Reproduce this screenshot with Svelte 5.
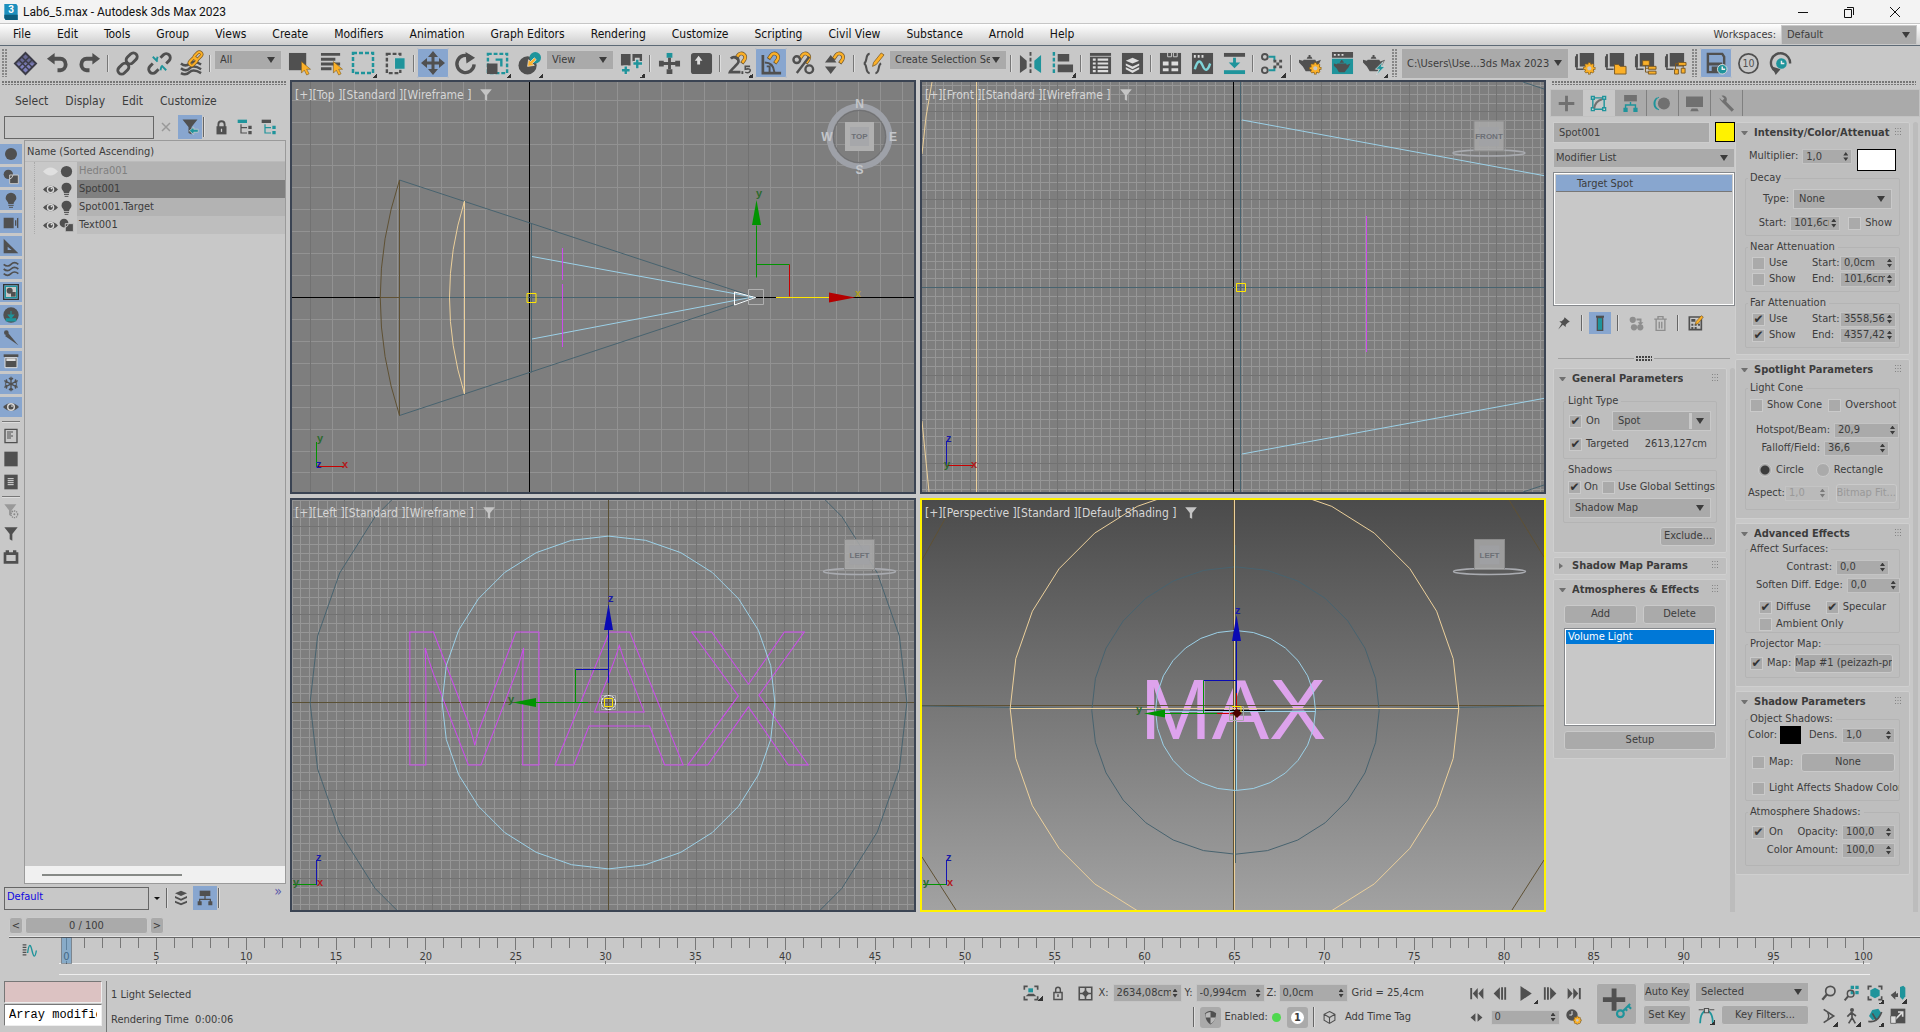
<script>
  const T = '#1f949b';
  const O = '#fbb028';
  const cursor = (x, y) =>
    `<path d="M${x} ${y}v12l3-3 2.500 5 2.500-1.200-2.500-4.800h4z" fill="${O}" stroke="#7a5a20" stroke-width=".6"/>`;
  const magnet = (x, y) =>
    `<g transform="translate(${x} ${y}) rotate(35)"><path d="M0 9V4a4 4 0 0 1 8 0v5" fill="none" stroke="#6b5530" stroke-width="4"/><path d="M0 8V4a4 4 0 0 1 8 0v4" fill="none" stroke="${O}" stroke-width="2.600"/></g>`;
  const teapot = `<path d="M5 8h12l1 2 5-2-3 6-2 2-3 4H7l-3-5-4-4V8l4 1zM8 7l1-2h4l1 2zM10 3h2v2h-2z"/>`;
  const gear = (x, y) =>
    `<g transform="translate(${x} ${y}) scale(.8)"><circle r="4" fill="none" stroke="#8a6420" stroke-width="5"/><path d="M0-8V8M-8 0H8M-5.500-5.500 5.500 5.500M5.500-5.500-5.500 5.500" stroke="#8a6420" stroke-width="3.500"/><path d="M0-7V7M-7 0H7M-5-5 5 5M5-5-5 5" stroke="${O}" stroke-width="2"/><circle r="4" fill="#c8c8c8" stroke="${O}" stroke-width="2.600"/></g>`;
  const bag = `<path d="M6 1h15v14H6zM1 5l3-3v14H1z"/><path d="M3 2v16h7" fill="none" stroke="#505050" stroke-width="1.500"/>`;
  const shapes = `<circle cx="8" cy="8" r="7"/><path d="M10 9h13v13H10z" stroke="#c8c8c8" stroke-width="1.500"/><path d="M10 15a7 7 0 0 0 5-6" fill="none" stroke="#c8c8c8" stroke-width="1.500"/>`;
  const bulb = `<path d="M12 1a8 8 0 0 1 8 8c0 4-4 5-4 9H8c0-4-4-5-4-9a8 8 0 0 1 8-8z"/><path d="M8 20h8M9 23h6" stroke="currentColor" stroke-width="1.500"/>`;
  const eye = `<path d="M0 12Q12 0 24 12 12 24 0 12z"/><circle cx="12" cy="12" r="6" fill="#d8d8d8"/><circle cx="12" cy="12" r="3.800"/><circle cx="13.500" cy="10.500" r="1.300" fill="#ddd"/>`;
  const tree = (a, b) =>
    `<path d="M1 1h14v5H1z" fill="${a}"/><path d="M6 8v13h9M6 13h9" fill="none" stroke="${b}" stroke-width="1.800"/><path d="M17 10h5v5h-5zM17 18h5v5h-5z" fill="${b}"/>`;
  const funnel = `<path d="M2 2h20l-8 10v10l-4-2v-8z"/>`;

  const icons = {
    diamond: `<path d="M12 1 23 12 12 23 1 12z" fill="#7f80bd" stroke="#3c3c48" stroke-width="2"/><path d="M8 5 19 16M5 8 16 19M16 5 5 16M19 8 8 19" stroke="#3c3c48" stroke-width="1.500"/><path d="M12 1 23 12H1z" fill="#3c3c48" opacity=".35"/>`,
    undo: `<path d="M9 1v12L1 7z"/><path d="M7 7h8a5.500 6 0 0 1 0 12h-3" fill="none" stroke="currentColor" stroke-width="4"/>`,
    redo: `<path d="M15 1v12l8-6z"/><path d="M17 7H9a5.500 6 0 0 0 0 12h3" fill="none" stroke="currentColor" stroke-width="4"/>`,
    link: `<g fill="none" stroke="currentColor" stroke-width="3"><rect x="10" y="3" width="13" height="8" rx="4" transform="rotate(-45 16 7)"/><rect x="1" y="13" width="13" height="8" rx="4" transform="rotate(-45 8 17)"/></g>`,
    unlink: `<g fill="none" stroke="currentColor" stroke-width="3"><path d="m13 6 3-3a4 4 0 0 1 6 6l-3 3M11 18l-3 3a4 4 0 0 1-6-6l3-3"/></g><path d="m5 5 5 5M14 14l5 5M9 9l1-4M14 15l-1 4" stroke="${T}" stroke-width="2"/>`,
    bind: `<path d="M1 12q5 4 9 0t12 1M1 17q5 4 9 0t12 1M1 22q5 3 9-1t12 1" fill="none" stroke="currentColor" stroke-width="2.600"/><g fill="none" stroke="#7b5a25" stroke-width="3.500"><rect x="14" y="2" width="9" height="5" rx="2.500" transform="rotate(-45 18 4)"/><rect x="9" y="8" width="9" height="5" rx="2.500" transform="rotate(-45 13 10)"/></g><g fill="none" stroke="${O}" stroke-width="2"><rect x="14" y="2" width="9" height="5" rx="2.500" transform="rotate(-45 18 4)"/><rect x="9" y="8" width="9" height="5" rx="2.500" transform="rotate(-45 13 10)"/></g>`,
    selObj: `<path d="M1 1h18v18H1z"/>${cursor(14, 10)}`,
    selName: `<path d="M1 1h20v3H1zM1 6h15v3H1zM1 11h20v3H1zM1 16h11v3H1z"/>${cursor(14, 10)}`,
    rect: `<path d="M2 2h20v20H2z" fill="none" stroke="${T}" stroke-width="2.500" stroke-dasharray="4 2"/>`,
    cross: `<path d="M3 2h14v20H3z" fill="none" stroke="currentColor" stroke-width="2.500" stroke-dasharray="4 2"/><path d="M11 6h11v12H11z" fill="${T}" stroke="#d0d0d0"/>`,
    move: `<path d="M12 0l5 6h-3.500v4.500H18V7l6 5-6 5v-3.500h-4.500V18H17l-5 6-5-6h3.500v-4.500H6V17l-6-5 6-5v3.500h4.500V6H7z"/>`,
    rotate: `<path d="M17 5A9 9 0 1 0 21 13" fill="none" stroke="currentColor" stroke-width="3.500"/><path d="M12 0 22 6l-9 6z"/>`,
    scale: `<path d="M2 2h20v20H2z" fill="none" stroke="${T}" stroke-width="2.500" stroke-dasharray="4 2"/><path d="M1 12h11v11H1z"/><path d="M10 8h6v7" fill="none" stroke="${T}" stroke-width="2.500"/>`,
    place: `<circle cx="10" cy="14" r="9.500"/><circle cx="18" cy="6" r="6" fill="${T}"/><path d="m17 6-4 4-2-2-1 7 7-1-2-2 4-4z" fill="${O}" stroke="#eee" stroke-width=".7"/>`,
    pivot: `<path d="M1 2h10v12H1zM13 2h10v8H13z"/><path d="M6 14v10M1 19h10M18 6v12M13 12h11" stroke="#ccc" stroke-width="5"/><path d="M6 15v8M2 19h8M18 8v9M14 12h9" stroke="${T}" stroke-width="2.500"/>`,
    manip: `<path d="M9 1h6v5H9z" fill="${T}"/><path d="M9 18h6v5H9zM1 9h5v6H1zM18 9h5v6h-5z"/><path d="M12 6v12M5 12h14" stroke="currentColor" stroke-width="3"/>`,
    keyb: `<rect x="1" y="1" width="22" height="22" rx="3"/><path d="M9 4l4 5h-2.500v4h-3V9H5z" fill="#ddd"/>`,
    snap: `${magnet(13, 0)}<g fill="none" stroke="currentColor" stroke-width="2.800"><path d="M3 7a4.500 4.500 0 0 1 8 3c0 3-8 8-9 11h11"/></g><path d="M14 20h2v3h-2z"/><path d="M23 15h-5v3c4-1 6 0 5 2s-3 2-5 1" fill="none" stroke="currentColor" stroke-width="1.600"/>`,
    angle: `<path d="M3 3v19h19" fill="none" stroke="currentColor" stroke-width="2.800"/><path d="M5 11q9 0 10 10M7 15h3v6" fill="none" stroke="currentColor" stroke-width="2"/>${magnet(14, 0)}`,
    percent: `${magnet(13, 0)}<g fill="none" stroke="currentColor" stroke-width="2.500"><circle cx="5" cy="8" r="3.500"/><circle cx="18" cy="18" r="4"/><path d="M18 5 5 22"/></g>`,
    spinner: `<path d="M7 3l6 8H1zM7 23l6-8H1z"/>${magnet(15, 0)}`,
    braces: `<path d="M8 2C3 2 6 11 2 12c4 1 1 10 6 10M14 22c5 0 2-9 6-10" fill="none" stroke="currentColor" stroke-width="2.200"/><path d="M11 15l1-4 8-10 3 2-8 10z" fill="${O}" stroke="#7b5a25" stroke-width=".8"/>`,
    mirror: `<path d="M1 3l7 6v8l-7 5z"/><path d="M23 3l-7 6v8l7 5z" fill="${T}"/><path d="M12 0v24" stroke="currentColor" stroke-width="2" stroke-dasharray="4 2"/>`,
    align: `<path d="M3 0v24" stroke="${T}" stroke-width="2.500" stroke-dasharray="4 2"/><path d="M7 2h12v8H7zM7 13h16v8H7z"/>`,
    table: `<path d="M1 1h22v22H1z"/><path d="M4 8h3M9 8h11M4 12h3M9 12h11M4 16h3M9 16h11M4 20h3M9 20h11" stroke="#ddd" stroke-width="2.200"/><path d="M1 4.500h22" stroke="#bbb"/>`,
    layers: `<path d="M1 1h22v22H1z"/><path d="M12 6l7 3-7 3-7-3zM5 12l7 3 7-3v2l-7 4-7-4zM5 16l7 3 7-3v2l-7 4-7-4z" fill="#ddd"/>`,
    ribbon: `<path d="M1 1h22v22H1z"/><path d="M9 1v4h4V1M15 1v4h4V1" stroke="#ccc" fill="none"/><path d="M4 10h6v4H4zM13 10h7v4h-7zM4 17h6v3H4zM13 17h7v3h-7z" fill="#ddd"/>`,
    curve: `<path d="M1 1h22v22H1z"/><path d="M3 3h2v3H3zM7 3h2v3H7zM11 3h2v3h-2z" fill="#ddd"/><path d="M4 18q4-14 8-4t8-2" fill="none" stroke="#7fd4d8" stroke-width="2.500"/>`,
    collapse: `<path d="M1 1h22v4H1z"/><path d="M1 19h22v4H1z" fill="${T}"/><path d="M12 6v8" stroke="${T}" stroke-width="3"/><path d="M6 11l6 6 6-6z" fill="${T}"/>`,
    schema: `<g fill="none" stroke="currentColor" stroke-width="2"><circle cx="4" cy="5" r="3"/><circle cx="4" cy="19" r="3"/></g><path d="M8 5h6v4M8 19h6v-4" fill="none" stroke="${T}" stroke-width="2"/><path d="M13 8h3v3h-3zM19 8h3v3h-3zM16 11h3v3h-3zM13 14h3v3h-3zM19 14h3v3h-3z"/>`,
    render: `${teapot}${gear(17, 17)}`,
    frame: `<path d="M1 0h22v6H1z"/><path d="M3 2h2v2H3zM7 2h2v2H7zM11 2h2v2h-2z" fill="#ddd"/><path d="M1 7h22v16H1z" fill="${T}"/><g transform="translate(3 6) scale(.75)">${teapot}</g>`,
    quick: `${teapot}<path d="M21 10l-8 8h4l-3 6 9-9h-4z" fill="${T}" stroke="#ddd" stroke-width=".8"/>`,
    p1: `${bag}${gear(16, 17)}`,
    p2: `${bag}<path d="M11 13h4l2 2h6v8H11z" fill="${O}" stroke="#7b5a25"/>`,
    p3: `${bag}<path d="M9 9h7v5H9zM15 15h8v3h-8zM15 20h8v3h-8z" fill="${O}" stroke="#7b5a25"/><path d="M12 14v7h3M12 17h3" fill="none" stroke="#7b5a25"/>`,
    p4: `${bag}<path d="M15 11h8v3h-8zM11 18h4v5h-4zM18 17h4v5h-4z" fill="${O}" stroke="#7b5a25"/><path d="M15 12h-3v6M20 14v3" fill="none" stroke="#7b5a25"/>`,
    autosave: `<path d="M3 2h15l2 3v16H3z" fill="none" stroke="currentColor" stroke-width="2.500"/><path d="M4 11h14v3H4zM7 15h7v6H7z"/><circle cx="18" cy="18" r="5" fill="${T}" stroke="#ddd"/><path d="M18 15v3h3" fill="none" stroke="#eee" stroke-width="1.500"/>`,
    ten: `<circle cx="12" cy="12" r="10" fill="none" stroke="currentColor" stroke-width="1.800"/><text x="12" y="16" text-anchor="middle" font-size="11">10</text>`,
    clock: `<path d="M7 20A10 10 0 1 1 22 12" fill="none" stroke="currentColor" stroke-width="2.500"/><path d="M3 15l9 3-5 6z"/><circle cx="13" cy="12" r="5.500" fill="${T}"/><path d="M13 9v3h3" fill="none" stroke="#eee" stroke-width="1.500"/>`,
    sphere: `<circle cx="12" cy="12" r="9"/>`,
    shapes, bulb, eye, funnel,
    ghost: `<path d="M0 12Q12-1 24 12 12 25 0 12z" fill="#e0e0e0"/>`,
    camera: `<path d="M1 4h15v16H1zM18 8h2v8h-2zM21 5l2-1v16l-2-1z"/>`,
    ruler: `<path fill-rule="evenodd" d="M1 1l22 22H1zM7 13v5h6z"/>`,
    waves: `<path d="M1 5q6 5 11 0t11 0M1 12q6 5 11 0t11 0M1 19q6 5 11 0t11 0" fill="none" stroke="currentColor" stroke-width="2.500"/>`,
    group: `<path d="M1 1h22v22H1z" fill="none" stroke="#333" stroke-width="2"/><path d="M3.500 3.500h17v17h-17z" fill="#c8c8c8" stroke="${T}" stroke-width="2"/><circle cx="10" cy="10" r="4.500"/><path d="M12 12h7v7h-7z"/>`,
    xref: `<circle cx="12" cy="12" r="11.500"/><path d="M12 6v7M8 12h8l-4 5zM5 17v4h14v-4" fill="${T}" stroke="${T}" stroke-width="1.600"/>`,
    bone: `<circle cx="5" cy="4" r="3.500"/><path d="M8 5 23 23 3 9z"/>`,
    container: `<path d="M1 2h22v4H1z"/><path d="M3 7h18v15H3z" fill="currentColor" stroke="#ddd" stroke-width="1.500"/><path d="M5 8h14v4H5z" fill="#ddd"/>`,
    snow: `<path d="M12 1v22M2 7l20 10M22 7 2 17M9 3l3 3 3-3M9 21l3-3 3 3M3 11l3-2-1-4M21 11l-3-2 1-4M3 13l3 2-1 4M21 13l-3 2 1 4" fill="none" stroke="currentColor" stroke-width="2"/>`,
    doc: `<path d="M3 2h18v20H3z" fill="none" stroke="currentColor" stroke-width="2"/><path d="M6 6h9M6 9h6M6 12h9M6 15h6" stroke="currentColor" stroke-width="1.500"/>`,
    block: `<path d="M2 1h20v22H2z"/>`,
    docDark: `<path d="M2 1h20v22H2z"/><path d="M7 7h9M7 10h9M7 13h9M7 16h9" stroke="#ddd" stroke-width="1.500"/>`,
    fgear: `<g fill="#999"><path d="M2 2h18l-7 9v9l-4-2v-7z"/></g><circle cx="17" cy="17" r="5" fill="#c8c8c8" stroke="#888" stroke-width="2" stroke-dasharray="2 1.200"/><circle cx="17" cy="17" r="1.500" fill="#888"/>`,
    crate: `<path fill-rule="evenodd" d="M1 5h3V2h5v3h6V2h5v3h3v17H1zM5 9v9h14V9z"/>`,
    farrow: `${funnel}<path d="M11 17l6-5v3h6v4h-6v3z" fill="${T}" stroke="#ccc"/>`,
    lock: `<path d="M4 10h16v13H4z"/><path d="M7 11V7a5 5 0 0 1 10 0v4" fill="none" stroke="currentColor" stroke-width="3"/><path d="M12 14v5" stroke="#ccc" stroke-width="2"/>`,
    lockOpen: `<path d="M5 11h14v12H5z" fill="none" stroke="currentColor" stroke-width="2.500"/><path d="M8 11V6a4 4 0 0 1 8 0v5" fill="none" stroke="currentColor" stroke-width="2.500"/><path d="M12 14v5" stroke="currentColor" stroke-width="2.500"/>`,
    treeA: tree(T, '#505050'),
    treeB: tree('#505050', T),
    stack: `<path d="M12 1l9 4-9 4-9-4zM3 9l9 4 9-4v3l-9 4-9-4zM3 16l9 4 9-4v3l-9 4-9-4z"/>`,
    org: `<path d="M4 1h16v8H4z"/><path d="M12 9v5M4 18v-4h16v4" fill="none" stroke="currentColor" stroke-width="2"/><path d="M1 17h6v6H1zM17 17h6v6h-6z"/>`,
    plus: `<path d="M10 1h4v9h9v4h-9v9h-4v-9H1v-4h9z"/>`,
    modify: `<path d="M4 4h16v16H4z" fill="none" stroke="${T}" stroke-width="2"/><path d="M1 1h6v6H1zM17 1h6v6h-6zM1 17h6v6H1zM17 17h6v6h-6z" fill="${T}"/><path d="M3 3h2v2H3zM19 3h2v2h-2zM3 19h2v2H3zM19 19h2v2h-2z" fill="#ddd"/><path d="M6 19q1-10 11-13" fill="none" stroke="currentColor" stroke-width="3"/>`,
    hier: `<path d="M3 0h18v9H3z"/><path d="M12 10v4M5 19v-5h14v5" fill="none" stroke="${T}" stroke-width="2"/><path d="M2 18h6v6H2zM16 18h6v6h-6z" fill="${T}"/>`,
    motion: `<circle cx="14" cy="12" r="8.500"/><path d="M7 3a10 10 0 0 0 0 18M4 4a10 10 0 0 0 0 16" fill="none" stroke="${T}" stroke-width="1.500"/>`,
    display: `<path d="M0 2h24v15H0zM8 19h8l2 4H6z"/>`,
    wrench: `<path d="M7 8 21 22" stroke="currentColor" stroke-width="4.500"/><path d="M2 4l4 4 3-3-4-4c5-1 9 3 7 8-4 4-9 0-10-5z"/>`,
    pin: `<path d="M13 2l9 8-3 1-4 4v4l-5-4-8 8 6-10-4-4h4l4-4z"/>`,
    result: `<path d="M6 1h12v3H6z"/><path d="M8 4h8v19H8z" fill="${T}" stroke="#505050" stroke-width="2"/>`,
    unique: `<g fill="#8e8e8e"><circle cx="6" cy="6" r="5"/><circle cx="8" cy="18" r="5"/><circle cx="18" cy="18" r="5"/><path d="M12 4h8v6h3l-5 5-4-5h3V7h-5z"/></g>`,
    trash: `<g fill="none" stroke="#8e8e8e" stroke-width="2.200"><path d="M2 5h20M8 4V1h8v3M5 6v17h14V6M10 9v11M14 9v11"/></g>`,
    config: `<path d="M2 3h18v19H2z" fill="none" stroke="currentColor" stroke-width="2.500"/><path d="M5 6h6v4H5zM5 13h3v3H5zM10 13h3v3h-3zM15 13h3v3h-3zM5 18h3v3H5zM10 18h3v3h-3z"/><path d="M11 14l1-4 8-9 3 2-8 10z" fill="${O}" stroke="#7b5a25"/>`,
    track: `<path d="M1 3h6M1 7h6M1 11h6M1 15h6M1 19h6" stroke="currentColor" stroke-width="2.200"/><path d="M9 16q3-22 7-4t7 0" fill="none" stroke="${T}" stroke-width="2.200"/>`,
    isolate: `<path d="M2 7V2h5M17 2h5v5M22 17v5h-5M7 22H2v-5" fill="none" stroke="currentColor" stroke-width="2.500"/><path d="M8 5h7v6H8z" fill="${T}"/><path d="M4 17l4-4h8l4 4z"/>`,
    offset: `<path d="M2 2h20v20H2zM12 2v20M2 12h20" fill="none" stroke="currentColor" stroke-width="2.500"/><path d="M6 12l6-6 6 6-6 6z"/>`,
    start: `<path d="M2 3h3v18H2zM14 3v18l-8-9zM23 3v18l-8-9z"/>`,
    prev: `<path d="M11 2v20L1 12zM13 2h3v20h-3zM18 2h3v20h-3z"/>`,
    play: `<path d="M4 0l18 12L4 24z"/>`,
    next: `<path d="M13 2v20l10-10zM8 2h3v20H8zM3 2h3v20H3z"/>`,
    end: `<path d="M22 3h-3v18h3zM10 3v18l8-9zM1 3v18l8-9z"/>`,
    keymode: `<path d="M10 4v16L1 12zM14 4v16l9-8z"/>`,
    timecfg: `<circle cx="9" cy="9" r="8.500"/><path d="M9 3v6H5" fill="none" stroke="#ddd" stroke-width="1.500"/>${gear(17, 17)}`,
    setkey: `<path d="M13 2h5v9h9v5h-9v9h-5v-9H4v-5h9z" fill="#505050"/><path d="M32 18l-8 8M30 20l3 3M27 23l2 2" stroke="${T}" stroke-width="2.200"/><circle cx="22" cy="28" r="3.500" fill="none" stroke="${T}" stroke-width="2.200"/>`,
    tangent: `<path d="M3 23C3 10 8 5 12 5s9 5 9 18" fill="none" stroke="${T}" stroke-width="2.500"/><path d="M9 2h6v6H9z" fill="#ccc" stroke="#505050" stroke-width="1.500"/><path d="M1 4h7M16 4h7" stroke="currentColor" stroke-width="1.500"/>`,
    mag: `<circle cx="14" cy="9" r="7" fill="none" stroke="currentColor" stroke-width="2.500"/><path d="M9 14 2 22" stroke="currentColor" stroke-width="3.500"/>`,
    magall: `<path d="M10 1h5v5h-5zM17 1h5v5h-5zM10 9h5v5h-5zM17 9h5v5h-5z" fill="${T}"/><circle cx="10" cy="13" r="5" fill="none" stroke="currentColor" stroke-width="2.200"/><path d="M6 17 1 23" stroke="currentColor" stroke-width="3"/>`,
    extents: `<path d="M2 7V2h5M17 2h5v5M22 17v5h-5M7 22H2v-5" fill="none" stroke="currentColor" stroke-width="2.500"/><path d="M12 4l7 4v8l-7 4-7-4V8z" fill="${T}"/>`,
    extall: `<path d="M15 3l5-2 3 3v13l-4 5-4-4z" fill="${T}"/><path d="M1 15l8-6v4l3-1v6H8v4z"/>`,
    fov: `<path d="M4 2l15 10L4 22" fill="none" stroke="currentColor" stroke-width="2.500"/><path d="M10 7q3 5 0 10" fill="none" stroke="currentColor" stroke-width="2"/>`,
    walk: `<circle cx="12" cy="3" r="3"/><path d="M12 6v9l-5 8M12 14l5 9M5 13l6-6 7 5" fill="none" stroke="currentColor" stroke-width="2.500"/>`,
    orbit: `<path d="M8 3l9-2 4 6-4 9-9 2-5-6z" fill="${T}"/><path d="M2 20q14 3 20-14M8 8l6 10" fill="none" stroke="currentColor" stroke-width="2.500"/>`,
    maxim: `<path d="M1 1h22v22H1z"/><path d="M12 6h7v7M18 7 8 17" fill="none" stroke="#ddd" stroke-width="2.500"/><path d="M1 12h8v11H1z" fill="#ddd" stroke="#505050"/>`,
    mask: `<path d="M3 5q9-8 18 0-1 14-9 18Q4 19 3 5z"/><path d="M12 3v9H4V6q4-3 8-3zM12 12h8q-2 7-8 10z" fill="#ccc" opacity=".85"/>`,
    cube: `<path d="M12 1l10 5v11l-10 6-10-6V6zM2 6l10 6 10-6M12 12v11" fill="none" stroke="currentColor" stroke-width="2"/>`,
    logo: `<path d="M2 0h18l2 3v21H4l-2-3z" fill="#1c8fbd"/><path d="M2 16h20v8H4l-2-3z" fill="#0c5c7c"/><text x="12" y="14" text-anchor="middle" font-size="15" font-weight="bold" fill="#fff">3</text>`,
  };

  const menus = ['File', 'Edit', 'Tools', 'Group', 'Views', 'Create', 'Modifiers', 'Animation', 'Graph Editors', 'Rendering', 'Customize', 'Scripting', 'Civil View', 'Substance', 'Arnold', 'Help'];

  const tools = [
    'diamond', 'undo', 'redo', '|', 'link', 'unlink', 'bind', '|', { sel: 'All', c: 'w68' },
    'selObj', 'selName', 'rect+', 'cross', '|', 'move*', 'rotate', 'scale+', 'place+', { sel: 'View', c: 'w68' },
    'pivot+', '|', 'manip', 'keyb', '|', 'snap+', 'angle*', 'percent', 'spinner', '|', 'braces',
    { sel: 'Create Selection Se', c: 'w118' }, '|', 'mirror', 'align+', '|', 'table', 'layers', '|', 'ribbon', 'curve',
    'collapse', '|', 'schema+', '|', 'render', 'frame', 'quick+', ':', { sel: 'C:\\Users\\Use...3ds Max 2023', c: 'w168' },
    'p1', 'p2', 'p3', 'p4', ':', 'autosave*', 'ten', 'clock',
  ];

  const strip = ['sphere', 'shapes', 'bulb', 'camera', 'ruler', 'waves', 'group', 'xref', 'bone', 'container', 'snow', 'eye'];
  const nodes = [
    { name: 'Hedra001', eye: 'ghost', icon: 'sphere', c: 'dim' },
    { name: 'Spot001', eye: 'eye', icon: 'bulb', c: 'on' },
    { name: 'Spot001.Target', eye: 'eye', icon: 'bulb', c: '' },
    { name: 'Text001', eye: 'eye', icon: 'shapes', c: 'soft' },
  ];
  const frames = Array.from({ length: 101 }, (_, i) => i);

  // Builds grid line paths around an origin: thin lines, plus every tenth as a darker line.
  function grid(ox, oy, step, x0, y0) {
    let thin = '';
    let dark = '';
    for (let k = -70; k <= 70; k++) {
      const x = ox + k * step;
      const y = oy + k * step;
      const lx = x > x0 && x < x0 + 622 ? `M${x.toFixed(1)} ${y0}v410` : '';
      const ly = y > y0 && y < y0 + 410 ? `M${x0} ${y.toFixed(1)}h622` : '';
      if (k % 10 === 0) dark += lx + ly;
      else thin += lx + ly;
    }
    return { thin, dark };
  }
  // Closed 28-sided outline of a light cone ring.
  function ring(cx, cy, r) {
    return Array.from({ length: 28 }, (_, i) => {
      const a = (i * Math.PI) / 14;
      return `${(cx + r * Math.cos(a)).toFixed(1)},${(cy + r * Math.sin(a)).toFixed(1)}`;
    }).join(' ');
  }
  const gTop = grid(529.5, 297.5, 21.93, 292, 82);
  const gFront = grid(1233.5, 287.5, 8.78, 922, 82);
  const gLeft = grid(608.5, 702.5, 8.79, 292, 500);
</script>

{#snippet ic(name, size = 24)}
  <span class="ic">{@html `<svg width="${size}" height="${size}" viewBox="0 0 24 24" fill="currentColor" aria-hidden="true">${icons[name]}</svg>`}</span>
{/snippet}

{#snippet sel(value, cls, label)}
  <span class="sel {cls}"><select aria-label={label ?? value}><option>{value}</option></select></span>
{/snippet}

{#snippet spin(value, cls, label, disabled = false)}
  <span class="spin {cls}" class:disabled>
    <input type="text" {value} aria-label={label} {disabled} />
    <i></i>
  </span>
{/snippet}

{#snippet chk(label, checked, cls = '')}
  <label class="chk {cls}"><input type="checkbox" {checked} /><span>{label}</span></label>
{/snippet}

{#snippet head(title, open = true)}
  <h3 class="head"><button type="button" aria-expanded={open}><i class:closed={!open}></i><span>{title}</span></button>
    <svg width="8" height="8" viewBox="0 0 8 8" aria-hidden="true"><path d="M1 1.500h6M1 4.500h6M1 7.500h6" stroke="#858585" stroke-dasharray="1 1.500" /></svg></h3>
{/snippet}

{#snippet vlabel(parts)}
  <div class="vlabel">
    {#each parts as p}<button type="button">[{p}]</button>{/each}
    {@render ic('funnel', 14)}
  </div>
{/snippet}

{#snippet cubeSide(x, y, name)}
  <ellipse cx={x} cy={y + 17} rx="36" ry="3" fill="none" stroke="#a9abb0" stroke-width="1.500" />
  <rect x={x - 15} y={y - 15} width="30" height="30" fill="#a9a9a9" fill-opacity=".85" stroke="#8b8b8b" />
  <rect x={x - 10} y={y - 9} width="20" height="19" fill="#9fa1a5" fill-opacity=".7" />
  <text {x} y={y + 3} class="face">{name}</text>
{/snippet}

<div class="app">
  <header class="title">
    {@render ic('logo', 16)}
    <span>Lab6_5.max - Autodesk 3ds Max 2023</span>
    <div class="win">
      <button type="button" aria-label="Minimize"><svg width="12" height="12" viewBox="0 0 12 12"><path d="M1 6.500h10" /></svg></button>
      <button type="button" aria-label="Restore"><svg width="12" height="12" viewBox="0 0 12 12"><path d="M1.500 3.500h7v8h-7zM4 1.500h6.500V9" /></svg></button>
      <button type="button" aria-label="Close"><svg width="12" height="12" viewBox="0 0 12 12"><path d="M1 1l10 10M11 1 1 11" /></svg></button>
    </div>
  </header>

  <nav class="menu">
    {#each menus as m}<button type="button">{m}</button>{/each}
    <label class="ws">Workspaces:
      <span class="sel w136"><select><option>Default</option></select></span>
    </label>
  </nav>

  <div class="toolbar" role="toolbar" aria-label="Main toolbar">
    <span class="grip"></span>
    {#each tools as t}
      {#if t === '|'}
        <span class="sep"></span>
      {:else if t === ':'}
        <span class="grip mid"></span>
      {:else if t.sel}
        {@render sel(t.sel, `${t.c} tsel`)}
      {:else}
        {@const key = t.replace(/[+*]/, '')}
        <button type="button" class="tool" class:active={t.endsWith('*')} class:fly={t.endsWith('+')} class:narrow={/^p\d/.test(t)} aria-label={key}>
          {@render ic(key, key === 'move' || key === 'rect' ? 24 : 23)}
        </button>
      {/if}
    {/each}
  </div>

  <main class="main">
    <aside class="explorer">
      <div class="dots"></div>
      <nav class="exmenu">
        <button type="button">Select</button><button type="button">Display</button><button type="button">Edit</button><button type="button">Customize</button>
      </nav>
      <div class="search">
        <input type="text" aria-label="Find" />
        <button type="button" class="x" aria-label="Clear"><svg width="10" height="10" viewBox="0 0 10 10"><path d="M1 1l8 8M9 1 1 9" stroke="#999" stroke-width="1.500" /></svg></button>
        <button type="button" class="hl" aria-label="Filter">{@render ic('farrow', 18)}</button>
        <span class="vs"></span>
        <button type="button" aria-label="Lock">{@render ic('lock', 15)}</button>
        <button type="button" aria-label="Tree by hierarchy">{@render ic('treeA', 16)}</button>
        <button type="button" aria-label="Tree by layer">{@render ic('treeB', 16)}</button>
      </div>
      <div class="exbody">
        <div class="strip">
          {#each strip as s}<button type="button" class="hl" aria-label={s}>{@render ic(s, 16)}</button>{/each}
          <hr />
          {#each ['doc', 'block', 'docDark'] as s}<button type="button" aria-label={s}>{@render ic(s, 16)}</button>{/each}
          <hr />
          {#each ['fgear', 'funnel', 'crate'] as s}<button type="button" aria-label={s}>{@render ic(s, 16)}</button>{/each}
        </div>
        <div class="list">
          <div class="lhead">Name (Sorted Ascending)</div>
          <ul>
            {#each nodes as n}
              <li class={n.c}>
                <i></i>{@render ic(n.eye, 15)}{@render ic(n.icon, 15)}<span class="nm">{n.name}</span>
              </li>
            {/each}
          </ul>
          <div class="hbar"><i></i></div>
        </div>
      </div>
      <div class="exfoot">
        <input type="text" value="Default" aria-label="Explorer preset" />
        <button type="button" class="dd" aria-label="Presets"></button>
        <span class="vs"></span>
        <button type="button" aria-label="Layers">{@render ic('stack', 16)}</button>
        <button type="button" class="hl" aria-label="Hierarchy">{@render ic('org', 16)}</button>
        <span class="vs"></span>
        <button type="button" class="more" aria-label="More">»</button>
      </div>
    </aside>

    <section class="views">
      <div class="view">
        {@render vlabel(['+', 'Top ', 'Standard ', 'Wireframe '])}
        <svg viewBox="292 82 622 410" preserveAspectRatio="xMidYMid slice">
          <g class="crisp">
            <path d={gTop.thin} stroke="#929292" /><path d={gTop.dark} stroke="#727272" />
            <path d="M529.500 82v410M292 297.500h622" stroke="#000" />
          </g>
          <g fill="none">
            <g stroke="#48636f"><path d="M399.500 180 756 297.500 399.500 415.500M531.500 223.500v149M380 297.500h376" /></g>
            <path d="M399.500 180v235.500Q361 297.500 399.500 180M380 297.500h19" stroke="#5f5134" />
            <path d="M464.500 201v193Q434.500 297.500 464.500 201z" stroke="#ecd09b" />
            <path d="M532 256.500 753 297 532 339" stroke="#9cd1e8" />
            <path d="M562.500 248v32M562.500 284v63" stroke="#cc4cec" class="crisp" />
            <path d="M527 293.500h9v9h-9z" stroke="#ffe600" />
            <path d="M734.500 292v13l21-7.500z" stroke="#fff" />
            <path d="M748.500 289.500h15v15h-15z" stroke="#b0b0b0" />
            <path d="M756.500 277.500v-52M756.500 264.500h33" stroke="#009400" />
            <path d="M789.500 264.500v32" stroke="#c80000" />
            <path d="M776 297.500h54" stroke="#ffe600" />
            <path d="M316.500 442v25" stroke="#009400" /><path d="M317 466.500h27" stroke="#c80000" />
          </g>
          <path d="M756.500 200l-4.500 25h9z" fill="#009400" />
          <path d="M855 297.500l-26-5v10z" fill="#b40000" />
          <g class="ax"><text x="756" y="197" fill="#2c6a2c">y</text><text x="855" y="297" fill="#b0a020">x</text>
            <text x="317" y="442" fill="#2c6a2c">y</text><text x="342" y="468" fill="#b01c1c">x</text><text x="316" y="468" fill="#1818a8">z</text></g>
          <circle cx="859.500" cy="136.500" r="30" fill="none" stroke="#9ea1a8" stroke-width="6" />
          <circle cx="859.500" cy="136.500" r="26" fill="none" stroke="#6e6f72" />
          <rect x="845" y="122" width="29" height="29" fill="#b0b0b0" /><rect x="850" y="127" width="19" height="19" fill="#a6a7aa" />
          <text x="859.500" y="139" class="face">TOP</text>
          <g class="comp"><text x="859.500" y="108">N</text><text x="859.500" y="174">S</text><text x="827" y="141">W</text><text x="893" y="141">E</text></g>
        </svg>
      </div>

      <div class="view">
        {@render vlabel(['+', 'Front ', 'Standard ', 'Wireframe '])}
        <svg viewBox="922 82 622 410" preserveAspectRatio="xMidYMid slice">
          <g class="crisp">
            <path d={gFront.thin} stroke="#969696" /><path d={gFront.dark} stroke="#727272" />
            <path d="M1233.500 82v410" stroke="#000" />
          </g>
          <g fill="none">
            <path d="M922 287.500h622M1240.500 82v410M1523 82l21 7M1523 492l21-7" stroke="#48636f" />
            <path d="M976.500 82v410M932 82q-7 34-10 72M922 421l7 71" stroke="#ecd09b" />
            <path d="M1242 120 1546 176M1242 454 1546 398" stroke="#9cd1e8" />
            <path d="M1366.500 216v136" stroke="#cc4cec" class="crisp" />
            <path d="M1236.500 283.500h9v8h-9z" stroke="#ffe600" />
            <path d="M946.500 441v25" stroke="#1414b4" /><path d="M947 465.500h26" stroke="#c80000" />
          </g>
          <g class="ax"><text x="946" y="442" fill="#1818a8">z</text><text x="971" y="468" fill="#b01c1c">x</text><text x="944" y="468" fill="#2c6a2c">y</text></g>
          {@render cubeSide(1489, 136, 'FRONT')}
        </svg>
      </div>

      <div class="view">
        {@render vlabel(['+', 'Left ', 'Standard ', 'Wireframe '])}
        <svg viewBox="292 500 622 410" preserveAspectRatio="xMidYMid slice">
          <g class="crisp">
            <path d={gLeft.thin} stroke="#969696" /><path d={gLeft.dark} stroke="#727272" />
            <path d="M608.500 500v410M292 702.500h622" stroke="#5a5034" />
          </g>
          <text x="394" y="765" class="wire">MAX</text>
          <g fill="none">
            <polygon points={ring(608.5, 702.5, 166.4)} stroke="#9cd1e8" />
            <polygon points={ring(608.5, 702.5, 298.4)} stroke="#48636f" />
            <path d="M575.500 669.500h33M608.500 606v77" stroke="#0a0ab4" />
            <path d="M575.500 669.500v33M535 702.500h53" stroke="#009400" />
            <path d="M601.500 695.500h14v14h-14z" stroke="#a8a8a8" />
            <circle cx="608.500" cy="702.500" r="7" stroke="#fff" stroke-dasharray="3 1" />
            <path d="M604.500 698.500h8v8h-8z" stroke="#ffe600" />
            <path d="M316.500 860v25" stroke="#1414b4" /><path d="M293 884.500h23" stroke="#009400" />
          </g>
          <path d="M608.500 604l-4.500 26h9z" fill="#0a0ab4" /><path d="M513 702.500l23-4.500v9z" fill="#009400" />
          <g class="ax"><text x="608" y="602" fill="#1818a8">z</text><text x="508" y="703" fill="#2c6a2c">y</text>
            <text x="316" y="861" fill="#1818a8">z</text><text x="293" y="886" fill="#2c6a2c">y</text><text x="317" y="886" fill="#b01c1c">x</text></g>
          {@render cubeSide(859.5, 554.5, 'LEFT')}
        </svg>
      </div>

      <div class="view persp">
        {@render vlabel(['+', 'Perspective ', 'Standard ', 'Default Shading '])}
        <svg viewBox="922 500 622 410" preserveAspectRatio="xMidYMid slice">
          <text x="1140" y="739" class="solid">MAX</text>
          <g fill="none">
            <path d="M922 560 950 510M1509 500 1544 557M922 857l34 53M1512 910l32-50M922 705.500h622M1233.500 500v410" stroke="#5f5134" />
            <path d="M922 706 1235 711 1544 706M1235.500 545v318" stroke="#48636f" />
            <polygon points={ring(1235.5, 710.5, 143.7)} stroke="#48636f" />
            <polygon points={ring(1234.5, 708.5, 224.3)} stroke="#ecd09b" />
            <path d="M1010 708.500h449M1234.500 500v410" stroke="#ecd09b" />
            <polygon points={ring(1235.5, 710.5, 80)} stroke="#9cd1e8" />
            <path d="M1155 711.500h160M1236.500 721v69" stroke="#9cd1e8" />
            <path d="M1205 710.500h60" stroke="#000" />
            <path d="M1203.500 680.500h33M1236.500 640v53" stroke="#0a0ab4" />
            <path d="M1203.500 680.500v33M1165 713.500h52" stroke="#009400" />
            <path d="M1236.500 693v20M1217 713.500h19" stroke="#c80000" />
            <path d="M1229.500 706.500h14v14h-14z" stroke="#a8a8a8" />
            <path d="M1232 706.500h9v6" stroke="#ffe600" />
            <path d="M946.500 860v25" stroke="#1414b4" /><path d="M923 884.500h23" stroke="#009400" />
          </g>
          <path d="M1236.500 615l-4.500 26h9z" fill="#0a0ab4" /><path d="M1144 713.500l21-4v8z" fill="#009400" />
          <path d="M1232 713l5-4 5 4-5 5z" fill="#4c0000" />
          <g class="ax"><text x="1235" y="614" fill="#1818a8">z</text><text x="1136" y="713" fill="#2c6a2c">y</text>
            <text x="946" y="861" fill="#1818a8">z</text><text x="923" y="886" fill="#2c6a2c">y</text><text x="947" y="886" fill="#b01c1c">x</text></g>
          {@render cubeSide(1489.5, 554.5, 'LEFT')}
        </svg>
      </div>
    </section>

    <aside class="panel">
      <div class="dots"></div>
      <div class="tabs">
        {#each ['plus', 'modify', 'hier', 'motion', 'display', 'wrench'] as t, i}
          <button type="button" class:cur={i === 1} class:bar={i > 1} aria-label={t}>{@render ic(t, 17)}</button>
        {/each}
      </div>
      <div class="cols">
        <div class="colA">
          <div class="namerow"><input type="text" value="Spot001" aria-label="Object name" /><button type="button" class="yellow" aria-label="Object color"></button></div>
          {@render sel('Modifier List', 'full modlist')}
          <div class="mods"><div>Target Spot</div></div>
          <div class="modtools">
            <button type="button" aria-label="Pin stack">{@render ic('pin', 14)}</button><span class="vs"></span>
            <button type="button" class="hl" aria-label="Show end result">{@render ic('result', 16)}</button><span class="vs"></span>
            <button type="button" aria-label="Make unique">{@render ic('unique', 15)}</button>
            <button type="button" aria-label="Remove modifier">{@render ic('trash', 15)}</button><span class="vs"></span>
            <button type="button" aria-label="Configure">{@render ic('config', 16)}</button>
          </div>
          <div class="split"><i></i></div>
          <div class="scroll">
            <div class="rolls">
              <section class="roll">
                {@render head('General Parameters')}
                <fieldset class="mt5 pb6">
                  <legend>Light Type</legend>
                  <div class="row h20 mt3 px5">{@render chk('On', true)}{@render sel('Spot', 'w99 end combo', 'Light type')}</div>
                  <div class="row h16 mt5 px5">{@render chk('Targeted', true)}<span class="end pr4">2613,127cm</span></div>
                </fieldset>
                <fieldset class="pb4">
                  <legend>Shadows</legend>
                  <div class="row h16 mt2 px4 g4">{@render chk('On', true, 'tight')}{@render chk('Use Global Settings', false, 'tight')}</div>
                  <div class="row h20 mt3 px5">{@render sel('Shadow Map', 'full', 'Shadow type')}</div>
                </fieldset>
                <div class="row h20 mt3 px10 pbt6"><button type="button" class="btn w56 end">Exclude...</button></div>
              </section>
              <section class="roll shut">{@render head('Shadow Map Params', false)}</section>
              <section class="roll">
                {@render head('Atmospheres & Effects')}
                <div class="row h20 mt4 px10 g6"><button type="button" class="btn grow">Add</button><button type="button" class="btn grow">Delete</button></div>
                <div class="fx"><div>Volume Light</div></div>
                <div class="row h20 mt4 px10 pbt8"><button type="button" class="btn grow">Setup</button></div>
              </section>
            </div>
            <div class="track"></div>
          </div>
        </div>

        <div class="colB">
          <div class="rolls">
            <section class="roll">
              {@render head('Intensity/Color/Attenuation')}
              <div class="row top h21 mt6 px14"><span class="lab">Multiplier:</span>{@render spin('1,0', 'w50 ml4', 'Multiplier')}<button type="button" class="white" aria-label="Light color"></button></div>
              <fieldset class="mt1 pb4">
                <legend>Decay</legend>
                <div class="row h20 mt4 px7"><span class="end pr4">Type:</span>{@render sel('None', 'w99', 'Decay type')}</div>
                <div class="row h16 mt6 px7"><span class="end pr4">Start:</span>{@render spin('101,6cm', 'w50', 'Decay start')}{@render chk('Show', false, 'ml8')}</div>
              </fieldset>
              <fieldset class="pb4">
                <legend>Near Attenuation</legend>
                <div class="row h16 mt1 px6 pr3">{@render chk('Use', false)}<span class="lab end w28">Start:</span>{@render spin('0,0cm', 'w56', 'Near start')}</div>
                <div class="row h16 px6 pr3">{@render chk('Show', false)}<span class="lab end w28">End:</span>{@render spin('101,6cm', 'w56', 'Near end')}</div>
              </fieldset>
              <fieldset class="pb4">
                <legend>Far Attenuation</legend>
                <div class="row h16 mt1 px6 pr3">{@render chk('Use', true)}<span class="lab end w28">Start:</span>{@render spin('3558,562cm', 'w56', 'Far start')}</div>
                <div class="row h16 px6 pr3">{@render chk('Show', true)}<span class="lab end w28">End:</span>{@render spin('4357,42cm', 'w56', 'Far end')}</div>
              </fieldset>
              <div class="foot short"></div>
            </section>

            <section class="roll">
              {@render head('Spotlight Parameters')}
              <fieldset class="mt1 pb6">
                <legend>Light Cone</legend>
                <div class="row h20 px4 pr3 clip">{@render chk('Show Cone', false)}{@render chk('Overshoot', false, 'ml6')}</div>
                <div class="row h18 mt6 px10"><span class="end pr4">Hotspot/Beam:</span>{@render spin('20,9', 'w65', 'Hotspot/Beam')}</div>
                <div class="row h18 px10"><span class="end pr4">Falloff/Field:</span>{@render spin('36,6', 'w65', 'Falloff/Field')}</div>
                <div class="row h16 mt5 px12 g12"><label class="rad"><input type="radio" name="cone" checked /><span>Circle</span></label><label class="rad"><input type="radio" name="cone" /><span>Rectangle</span></label></div>
                <div class="row h20 mt5 px2"><span class="lab">Aspect:</span>{@render spin('1,0', 'w44', 'Aspect', true)}<button type="button" class="btn off end" disabled>Bitmap Fit...</button></div>
              </fieldset>
              <div class="foot"></div>
            </section>

            <section class="roll">
              {@render head('Advanced Effects')}
              <fieldset class="up">
                <legend>Affect Surfaces:</legend>
                <div class="row h18 mt2 px10"><span class="end pr4">Contrast:</span>{@render spin('0,0', 'w53', 'Contrast')}</div>
                <div class="row h18 px10"><span class="end pr4">Soften Diff. Edge:</span>{@render spin('0,0', 'w53', 'Soften diffuse edge')}</div>
                <div class="row h18 mt4 px14">{@render chk('Diffuse', true)}{@render chk('Specular', true, 'end')}</div>
                <div class="row h16 px14">{@render chk('Ambient Only', false)}</div>
              </fieldset>
              <fieldset class="pb4">
                <legend>Projector Map:</legend>
                <div class="row h20 mt2 px4 pr6">{@render chk('Map:', true)}<button type="button" class="btn map end">Map #1 (peizazh-priroda)</button></div>
              </fieldset>
              <div class="foot"></div>
            </section>

            <section class="roll">
              {@render head('Shadow Parameters')}
              <fieldset class="mt0 pb4">
                <legend>Object Shadows:</legend>
                <div class="row h18 px2 pr4"><span class="lab">Color:</span><button type="button" class="black" aria-label="Shadow color"></button><span class="lab ml8">Dens.</span>{@render spin('1,0', 'w53 end', 'Density')}</div>
                <div class="row h20 mt8 px6 pr4">{@render chk('Map:', false)}<button type="button" class="btn w94 end">None</button></div>
                <div class="row h16 mt8 px6 clip">{@render chk('Light Affects Shadow Color', false)}</div>
              </fieldset>
              <fieldset class="pb6">
                <legend>Atmosphere Shadows:</legend>
                <div class="row h18 mt4 px6 pr4">{@render chk('On', true)}<span class="end pr4">Opacity:</span>{@render spin('100,0', 'w53', 'Opacity')}</div>
                <div class="row h18 px6 pr4"><span class="end pr4">Color Amount:</span>{@render spin('100,0', 'w53', 'Color amount')}</div>
              </fieldset>
              <div class="foot"></div>
            </section>
          </div>
          <div class="track"></div>
        </div>
      </div>
    </aside>
  </main>

  <section class="time">
    <div class="tslide"><button type="button" class="btn">&lt;</button><button type="button" class="btn cur">0 / 100</button><button type="button" class="btn">&gt;</button></div>
    <div class="rulerrow">
      <div class="tic">{@render ic('track', 15)}</div>
      <div class="ruler">
        {#each frames as f}
          <span class:major={f % 5 === 0} class:now={f === 0}>{#if f % 5 === 0}<em>{f}</em>{/if}</span>
        {/each}
      </div>
    </div>
    <div class="below"></div>
  </section>

  <footer class="status">
    <div class="script"><input class="pink" type="text" aria-label="Macro recorder" /><input type="text" value="Array modifier" aria-label="Listener" /></div>
    <div class="msgs"><p>1 Light Selected</p><p class="pre">Rendering Time  0:00:06</p></div>
    <div class="coords">
      <div class="srow">
        <button type="button" class="fly" aria-label="Isolate">{@render ic('isolate', 16)}</button>
        <button type="button" aria-label="Selection lock">{@render ic('lockOpen', 14)}</button>
        <button type="button" aria-label="Offset mode">{@render ic('offset', 15)}</button>
        <span class="w14">X:</span>{@render spin('2634,08cm', 'w69 tall', 'X')}
        <span class="w14 ctr">Y:</span>{@render spin('-0,994cm', 'w69 tall', 'Y')}
        <span class="w14 ctr">Z:</span>{@render spin('0,0cm', 'w69 tall', 'Z')}
        <span class="ml4">Grid = 25,4cm</span>
      </div>
      <div class="srow low">
        <span class="vs"></span>
        <button type="button" class="chip" aria-label="Adaptive degradation">{@render ic('mask', 15)}</button>
        <span class="ml4">Enabled:</span><i class="led"></i>
        <button type="button" class="chip one" aria-label="Notifications"><b>1</b></button>
        <span class="vs"></span>
        <button type="button" class="tag">{@render ic('cube', 13)}<span>Add Time Tag</span></button>
      </div>
    </div>
    <div class="playb">
      <div class="srow pl">
        {#each ['start', 'prev', 'play', 'next', 'end'] as p}<button type="button" class:fly={p === 'play'} aria-label={p}>{@render ic(p, 15)}</button>{/each}
      </div>
      <div class="srow pl">
        <button type="button" aria-label="Key mode">{@render ic('keymode', 13)}</button>{@render spin('0', 'w69', 'Current frame')}<button type="button" aria-label="Time configuration">{@render ic('timecfg', 16)}</button>
      </div>
    </div>
    <button type="button" class="btn big" aria-label="Set keys"><svg width="35" height="36" viewBox="0 0 36 36">{@html icons.setkey}</svg></button>
    <div class="keys">
      <button type="button" class="btn">Auto Key</button>{@render sel('Selected', 'w114 span2')}
      <button type="button" class="btn">Set Key</button><button type="button" class="fly plain" aria-label="Tangents">{@render ic('tangent', 17)}</button><button type="button" class="btn">Key Filters...</button>
    </div>
    <div class="nav">
      {#each ['mag', 'magall', 'extents', 'extall', 'fov', 'walk', 'orbit', 'maxim'] as n, i}<button type="button" class:fly={i > 1 && i < 7} aria-label={n}>{@render ic(n, 16)}</button>{/each}
    </div>
  </footer>
</div>

<style>
  :global(body) { margin: 0; background: #c8c8c8; }
  :global(.ic svg) { display: block; overflow: visible; }
  .app { display: flex; flex-direction: column; height: 100vh; overflow: hidden; background: #c8c8c8; color: #3c3c3c; font-family: 'DejaVu Sans Condensed', 'DejaVu Sans', Tahoma, sans-serif; font-stretch: condensed; font-size: 11px; line-height: 14px; }
  .app *, .app *::before, .app *::after { box-sizing: border-box; }
  button, input, select { font: inherit; color: inherit; margin: 0; padding: 0; border: 0; background: none; border-radius: 0; min-width: 0; }
  .ic { display: block; flex: none; color: #505050; }

  .title { display: flex; align-items: center; height: 24px; flex: none; padding-left: 3px; gap: 4px; background: #f3f3f3; border-bottom: 1px solid #c6c6c6; color: #111; font-family: Roboto, 'Noto Sans', sans-serif; font-size: 12px; font-stretch: normal; }
  .win { display: flex; margin-left: auto; padding-right: 2px; }
  .win button { width: 46px; display: flex; justify-content: center; }
  .win svg { fill: none; stroke: #111; }

  .menu { display: flex; align-items: center; gap: 26px; height: 22px; flex: none; padding-left: 13px; background: linear-gradient(#fff, #cdcdcd); border-bottom: 1px solid #5d6a76; color: #111; font-size: 12px; }
  .menu > button { white-space: nowrap; line-height: 20px; height: 21px; padding-bottom: 1px; }
  .ws { margin-left: auto; display: flex; align-items: center; gap: 5px; font-size: 11px; color: #3c3c3c; padding-right: 3px; }
  .ws .sel { height: 20px; }

  .sel { position: relative; display: flex; flex: none; height: 20px; background: #aaa; border: 1px solid #c9c9c9; }
  .sel select { appearance: none; width: 100%; padding: 0 16px 0 5px; overflow: hidden; }
  .sel::after { content: ''; position: absolute; right: 6px; top: 6px; border: 4px solid transparent; border-top: 6px solid #3c3c3c; border-bottom: 0; pointer-events: none; }
  .combo::before { content: ''; position: absolute; right: 18px; top: 1px; bottom: 1px; width: 3px; background: #c8c8c8; }
  .full { width: 100%; }
  .w136 { width: 136px; } .w168 { width: 168px; } .w118 { width: 118px; } .w114 { width: 114px; } .w99 { width: 99px; } .w94 { width: 94px; }
  .w69 { width: 69px; } .w68 { width: 68px; } .w65 { width: 65px; } .w56 { width: 56px; } .w53 { width: 53px; } .w50 { width: 50px; } .w44 { width: 44px; } .w28 { width: 28px; } .w14 { width: 14px; }

  .toolbar { display: flex; align-items: center; height: 34px; flex: none; padding-left: 2px; }
  .grip { width: 5px; height: 28px; margin-right: 2px; background: radial-gradient(circle at 1px 1px, #777 1px, transparent 1px) 0 0 / 3px 3px; opacity: .8; }
  .grip.mid { margin: 0 3px 0 2px; }
  .tool { position: relative; width: 32px; height: 30px; display: grid; place-items: center; flex: none; }
  .tool.narrow { width: 30px; }
  .active { background: #88a6cf; border-radius: 2px; box-shadow: inset 0 0 0 1px #c8c8c8; }
  .fly { position: relative; }
  .fly::after { content: ''; position: absolute; right: 2px; bottom: 0; background: linear-gradient(135deg, transparent 50%, #333 50%); width: 5px; height: 5px; }
  .sep { width: 6px; height: 17px; flex: none; background: linear-gradient(90deg, transparent 2px, #777 2px 3px, #ddd 3px 4px, transparent 4px); }
  .tsel { margin: 4px 1px 0; align-self: flex-start; }
  .w168.tsel { height: 31px; margin-top: 2px; }
  .w168.tsel::after { top: 11px; }
  .w118.tsel { margin-left: 0; }

  .main { display: flex; flex: 1; min-height: 0; }
  .dots { height: 4px; margin: 1px 4px 0 2px; flex: none; background: radial-gradient(circle at 1px 1px, #777 1px, transparent 1px) 0 0 / 3px 3px; }

  .explorer { width: 290px; flex: none; display: flex; flex-direction: column; }
  .exmenu { display: flex; gap: 17px; padding: 9px 15px 6px; font-size: 12px; line-height: 14px; }
  .search { display: flex; align-items: center; height: 26px; padding-left: 4px; }
  .search > input { width: 150px; height: 23px; border: 1px solid #666; padding: 0 4px; }
  .search > button { width: 24px; display: flex; justify-content: center; }
  .search .hl, .exfoot .hl { height: 24px; align-items: center; }
  .hl { background: #88a6cf; }
  .vs { width: 2px; height: 20px; flex: none; margin: 0 1px; border-left: 1px solid #666; border-right: 1px solid #ddd; }
  .search .vs { margin-right: 4px; }
  .exbody { display: flex; flex: 1; min-height: 0; }
  .strip { display: flex; flex-direction: column; gap: 3px; width: 24px; padding-top: 4px; }
  .strip button { width: 22px; height: 20px; display: grid; place-items: center; }
  .strip hr { width: 18px; height: 2px; margin: 1px 2px 0; border: 0; border-top: 1px solid #777; border-bottom: 1px solid #ddd; }
  .list { display: flex; flex-direction: column; width: 262px; border: 1px solid #9a9a9a; }
  .lhead { height: 21px; padding: 4px 2px 2px; border-bottom: 1px solid #bbb; }
  ul { list-style: none; margin: 0; padding: 0; flex: 1; }
  li { display: flex; align-items: center; height: 18px; }
  li i { width: 9px; height: 18px; margin-left: 9px; border-left: 1px dotted #aaa; }
  li .ic + .ic { margin-left: 1px; }
  li .nm { flex: 1; margin-left: 3px; padding: 2px; height: 18px; background: #b3b3b3; }
  li.on .nm { background: #808080; }
  li.soft .nm { background: #bebebe; }
  li.dim .nm { color: #808080; }
  .hbar { height: 17px; background: #f0f0f0; display: flex; align-items: center; }
  .hbar i { width: 140px; height: 2px; margin-left: 17px; background: #868986; }
  .exfoot { display: flex; align-items: center; height: 28px; padding: 0 6px 0 4px; }
  .exfoot input { width: 145px; height: 23px; border: 1px solid #666; color: #1008e0; padding: 0 2px 4px; }
  .exfoot button { width: 24px; display: flex; justify-content: center; }
  .exfoot .dd { width: 16px; }
  .dd::after { content: ''; border: 3px solid transparent; border-top-color: #111; border-bottom: 0; }
  .exfoot .more { margin-left: auto; width: 12px; color: #5a58a8; font-size: 14px; align-self: flex-start; }

  .views { flex: 1; min-width: 0; display: grid; grid-template: minmax(0, 1fr) minmax(0, 1fr) / minmax(0, 1fr) minmax(0, 1fr); gap: 4px; }
  .view { position: relative; border: 2px solid #3b4453; background: #7e7e7e; }
  .persp { border-color: #fff200; background: linear-gradient(#4b4b4b, #a2a2a2); }
  .view > svg { display: block; width: 100%; height: 100%; }
  .view svg { font-family: 'Liberation Sans', Arial, sans-serif; }
  .crisp { shape-rendering: crispEdges; }
  .vlabel { position: absolute; left: 3px; top: 6px; display: flex; align-items: center; color: #d6d6d6; text-shadow: 1px 1px #333; white-space: nowrap; font-size: 12px; }
  .vlabel button { white-space: pre; }
  .vlabel .ic { color: #c4c4c4; margin-left: 8px; }
  .wire { font-size: 193px; fill: none; stroke: #cc4cec; }
  .solid { font-size: 86px; fill: #dda3ec; }
  .face { font-size: 8px; font-weight: bold; fill: #6c6f75; text-anchor: middle; }
  .ax { font-size: 11px; font-weight: bold; }
  .comp { font-size: 12px; font-weight: bold; fill: #c4c6ca; text-anchor: middle; }

  .panel { width: 374px; flex: none; display: flex; flex-direction: column; padding-left: 4px; }
  .tabs { display: flex; height: 28px; flex: none; margin-top: 4px; background: #aaa; border: 1px solid #c2c2c2; }
  .tabs button { width: 32px; display: grid; place-items: center; border-right: 1px solid transparent; }
  .tabs .ic { color: #707070; }
  .tabs .bar { border-right-color: #808080; }
  .tabs .cur { background: #c8c8c8; }
  .cols { display: flex; flex: 1; min-height: 0; padding-top: 5px; }
  .colA { width: 185px; flex: none; display: flex; flex-direction: column; padding: 0 0 0 3px; }
  .namerow { display: flex; justify-content: space-between; }
  .namerow input { width: 157px; height: 21px; padding: 0 5px; background: #aaa; border: 1px solid #cdcdcd; }
  .yellow { width: 20px; height: 20px; background: #fff200; border: 1px solid #000; }
  .modlist { margin-top: 5px; }
  .modlist select { padding-left: 2px; }
  .mods { margin-top: 4px; height: 134px; border: 1px solid #85888c; box-shadow: inset 0 0 0 1px #fff; padding: 2px; }
  .mods div { height: 17px; padding: 2px 0 0 21px; background: #88a6cf; border-bottom: 1px solid #777; }
  .modtools { display: flex; align-items: center; height: 34px; gap: 2px; }
  .modtools button { width: 22px; height: 22px; display: grid; place-items: center; }
  .modtools .vs { margin: 0 4px; height: 16px; }
  .split { height: 19px; margin: 9px 5px 0; display: flex; align-items: center; background: linear-gradient(#a0a0a0, #a0a0a0) 0 50% / 100% 1px no-repeat; }
  .split i { width: 16px; height: 5px; margin: auto; background: radial-gradient(circle at 1px 1px, #444 1px, #c8c8c8 1px) 0 0 / 3px 3px; box-shadow: 0 0 0 2px #c8c8c8; }
  .scroll { display: flex; flex: 1; min-height: 0; gap: 3px; }
  .rolls { flex: 1; min-width: 0; display: flex; flex-direction: column; gap: 4px; }
  .track { width: 5px; background: #bcbcbc; border-radius: 3px 3px 0 0; }
  .colB { flex: 1; min-width: 0; display: flex; gap: 3px; padding-right: 2px; }
  .roll { background: #bebebe; border: 1px solid #cfcfcf; border-radius: 2px; }
  .head { display: flex; align-items: center; height: 20px; margin: 0; padding: 0 7px 0 5px; font-size: 11px; }
  .shut .head { height: 16px; }
  .head button { display: flex; align-items: center; flex: 1; font-weight: bold; text-align: left; overflow: hidden; white-space: nowrap; }
  .head i { flex: none; width: 7px; margin-right: 6px; border: 3px solid transparent; border-top: 4px solid #707070; border-bottom: 0; }
  .head i.closed { border: 3px solid transparent; border-left: 4px solid #707070; border-right: 0; width: 4px; margin-right: 9px; }
  .head span { overflow: hidden; }
  .head svg { flex: none; margin: 0 0 4px 4px; }
  fieldset { min-width: 0; margin: 4px 9px 0; padding: 0; border: 1px solid #b4b4b4; border-radius: 2px; }
  legend { margin-left: 2px; padding: 0 3px 0 2px; line-height: 14px; }
  .row { display: flex; align-items: center; white-space: nowrap; }
  .row.top { align-items: flex-start; }
  .row.clip { overflow: hidden; }
  .h16 { height: 16px; } .h18 { height: 18px; } .h20 { height: 20px; } .h21 { height: 21px; }
  .mt0 { margin-top: 0; } .mt1 { margin-top: 1px; } .mt2 { margin-top: 2px; } .mt3 { margin-top: 3px; } .mt4 { margin-top: 4px; } .mt5 { margin-top: 5px; } .mt6 { margin-top: 6px; } .mt8 { margin-top: 8px; }
  fieldset.up { margin-top: -2px; }
  .pb4 { padding-bottom: 4px; } .pb6 { padding-bottom: 6px; }
  .px2 { padding: 0 2px; } .px4 { padding: 0 4px; } .px5 { padding: 0 5px; } .px6 { padding: 0 6px; } .px7 { padding: 0 7px; } .px10 { padding: 0 10px; } .px12 { padding: 0 12px; } .px14 { padding: 0 13px; }
  .pr3 { padding-right: 3px; } .pr4 { padding-right: 4px; } .pr6 { padding-right: 6px; }
  .g4 { gap: 4px; } .g6 { gap: 6px; } .g12 { gap: 12px; }
  .ml4 { margin-left: 4px; } .ml6 { margin-left: 6px; } .ml8 { margin-left: 8px; }
  .end { margin-left: auto; }
  .pbt6 { margin-bottom: 6px; } .pbt8 { margin-bottom: 8px; }
  .foot { height: 8px; }
  .foot.short { height: 6px; }
  .grow { flex: 1; }
  .ctr { text-align: center; }

  .spin { display: flex; align-items: center; flex: none; height: 15px; background: #aaa; border: 1px solid #c4c4c4; }
  .spin input { flex: 1; width: 0; padding-left: 3px; height: 13px; }
  .spin i { width: 5px; height: 9px; margin: 0 3px 0 2px; background: #3c3c3c; clip-path: polygon(50% 0, 100% 40%, 0 40%, 50% 0, 0 60%, 100% 60%, 50% 100%, 0 60%); }
  .spin.disabled { background: #bababa; color: #999; }
  .spin.disabled i { opacity: .5; }
  .chk, .rad { display: flex; align-items: center; gap: 4px; flex: none; }
  .chk.tight { gap: 3px; }
  .chk input { appearance: none; width: 13px; height: 13px; background: #aaa; border: 1px solid #cacaca; display: grid; place-items: center; }
  .chk input:checked::after { content: '✔'; font: 12px/11px 'DejaVu Sans', sans-serif; color: #333; }
  .rad input { appearance: none; width: 14px; height: 14px; border-radius: 50%; background: #aaa; border: 1px solid #cacaca; }
  .rad input:checked { background: radial-gradient(circle, #3c3c3c 4px, #aaa 5px); }
  .btn { height: 19px; padding: 0 2px; background: #aaa; border: 1px solid #cacaca; border-radius: 3px; white-space: nowrap; overflow: hidden; }
  .btn.off { background: #bababa; color: #999; padding: 0; }
  .map { width: 99px; text-align: left; padding: 0; }
  .white, .black { width: 39px; height: 22px; margin-left: auto; background: #fff; border: 1px solid #000; }
  .black { width: 21px; height: 18px; margin-left: 3px; background: #000; }
  .fx { height: 98px; margin: 4px 10px 0; border: 1px solid #85888c; box-shadow: inset 0 0 0 1px #fff; padding: 1px; background: #c8c8c8; }
  .fx div { height: 14px; padding-left: 2px; background: #0078d7; color: #fff; }

  .time { flex: none; padding: 5px 0 0 9px; }
  .tslide { display: flex; gap: 2px; height: 17px; }
  .tslide .btn { width: 14px; height: 17px; padding: 0; line-height: 14px; }
  .tslide .cur { width: 123px; }
  .rulerrow { display: flex; height: 27px; margin: 3px 0 0; border-top: 1px solid #666; box-shadow: 0 -1px #e4e4e4; }
  .tic { width: 50px; padding: 5px 0 0 13px; }
  .ruler { flex: 1; display: flex; justify-content: space-between; margin-right: 50px; padding: 0 6px 0 7px; border-bottom: 1px solid #eee; }
  .ruler span { display: flex; flex-direction: column; align-items: center; width: 1px; height: 10px; background: #777; white-space: nowrap; }
  .ruler .major { height: 26px; background: linear-gradient(#777 12px, transparent 12px 23px, #777 23px); }
  .ruler em { margin-top: 12px; font-style: normal; }
  .ruler .now { position: relative; }
  .ruler .now::before { content: ''; position: absolute; left: -4px; top: 0; width: 9px; height: 25px; background: #4a90c8; opacity: .5; outline: 1px solid #345; }
  .below { height: 11px; margin: 0 50px 0 50px; border-bottom: 1px solid #eee; }

  .status { display: flex; flex: none; height: 57px; padding: 6px 11px 0 4px; }
  .script { width: 103px; display: flex; flex-direction: column; gap: 1px; border-right: 1px solid #777; }
  .script input { width: 98px; height: 22px; padding: 0 4px; border: 1px solid #777; border-right-color: #eee; border-bottom-color: #eee; background: #fff; color: #000; font: 12px 'Liberation Mono', monospace; }
  .script .pink { background: #dcc2c2; }
  .msgs { flex: 1; padding: 7px 0 0 4px; }
  .msgs p { margin: 0 0 11px; }
  .pre { white-space: pre; }
  .coords { margin-right: 42px; }
  .srow { display: flex; align-items: center; height: 24px; white-space: nowrap; }
  .coords .srow > button { width: 27px; display: flex; justify-content: center; }
  .tall { height: 18px; }
  .low { padding-left: 174px; }
  .coords .low .chip { width: 21px; height: 21px; align-items: center; background: #aaa; border-radius: 3px; margin-left: 2px; }
  .one b { width: 13px; height: 13px; line-height: 13px; border-radius: 50%; background: #fff; }
  .led { width: 9px; height: 9px; margin: 0 4px; border-radius: 50%; background: #4ed84e; }
  .low .vs + .chip { margin-left: 4px; }
  .low .one + .vs { margin-left: 5px; }
  .coords .low .tag { width: auto; margin-left: 7px; gap: 9px; align-items: center; }
  .playb { width: 118px; margin-right: 12px; }
  .pl { justify-content: space-between; }
  .playb .fly::after { right: -3px; bottom: -3px; }
  .pl button { width: 20px; display: flex; justify-content: center; }
  .big { width: 41px; height: 42px; margin: 2px 6px 0 0; padding: 2px; }
  .keys { display: grid; grid-template-columns: 48px 22px 88px; column-gap: 4px; row-gap: 3px; align-content: start; margin-right: 8px; padding-top: 1px; }
  .keys .btn { height: 20px; padding: 0; }
  .span2 { grid-column: span 2; }
  .plain { display: grid; place-items: center; }
  .nav { display: grid; grid-template-columns: repeat(4, 23px); grid-auto-rows: 23px; }
  .nav button { display: grid; place-items: center; }
</style>
